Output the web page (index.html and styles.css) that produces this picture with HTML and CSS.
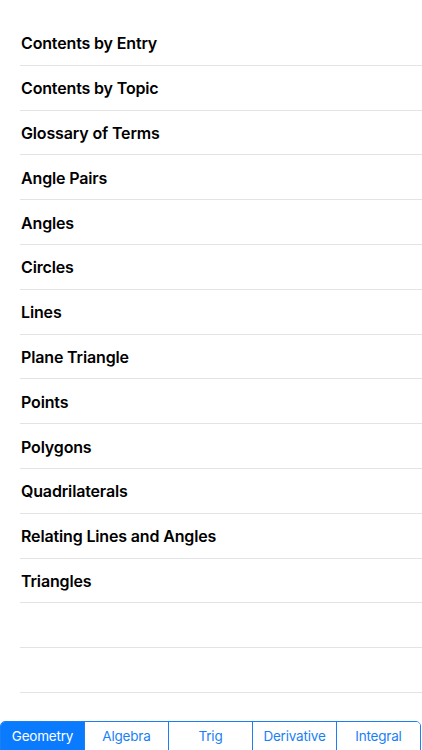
FILE: index.html
```html
<!DOCTYPE html>
<html lang="en">
<head>
    <meta charset="UTF-8">
    <meta name="viewport" content="width=device-width, initial-scale=1.0">
    <title>Geometry</title>
    <link rel="stylesheet" href="styles.css">
</head>
<body>

    <ul class="topic-list">
        <li>Contents by Entry</li>
        <li>Contents by Topic</li>
        <li>Glossary of Terms</li>
        <li>Angle Pairs</li>
        <li>Angles</li>
        <li>Circles</li>
        <li>Lines</li>
        <li>Plane Triangle</li>
        <li>Points</li>
        <li>Polygons</li>
        <li>Quadrilaterals</li>
        <li>Relating Lines and Angles</li>
        <li>Triangles</li>
        <li></li>
        <li></li>
    </ul>

    <div class="segments">
        <button class="active">Geometry</button>
        <button>Algebra</button>
        <button>Trig</button>
        <button>Derivative</button>
        <button>Integral</button>
    </div>

</body>
</html>
```

FILE: styles.css
```css
body {
    font-family: Inter, "Noto Sans", sans-serif;
    margin: 0;
    padding: 0;
    height: 750px;
    overflow: hidden;
    background: #FFF;
    display: flex;
    flex-direction: column;
}
.topic-list {
    list-style: none;
    margin: 21px 0 0 20px;
    padding: 0;
}
.topic-list li {
    height: 42.8px;
    border-bottom: 1px solid #e3e3e5;
    display: flex;
    align-items: center;
    padding: 1px 0 0 1px;
    font-size: 16px;
    font-weight: 600;
    color: #000;
    letter-spacing: -0.15px;
}
.segments {
    display: flex;
    flex-shrink: 0;
    margin: 28px 1px 0 0;
    height: 40px;
    border: 1px solid #1a7ff5;
    border-radius: 5px;
    overflow: hidden;
}
.segments button {
    flex: 1;
    border: none;
    border-left: 1px solid #1a7ff5;
    background: #FFF;
    color: #1a7ff5;
    font-family: Inter, "Noto Sans", sans-serif;
    font-size: 13.5px;
    letter-spacing: -0.2px;
    padding: 0 0 11px;
    margin: 0;
}
.segments button:first-child {
    border-left: none;
}
.segments button.active {
    background: #0a7bff;
    color: #FFF;
}
```
